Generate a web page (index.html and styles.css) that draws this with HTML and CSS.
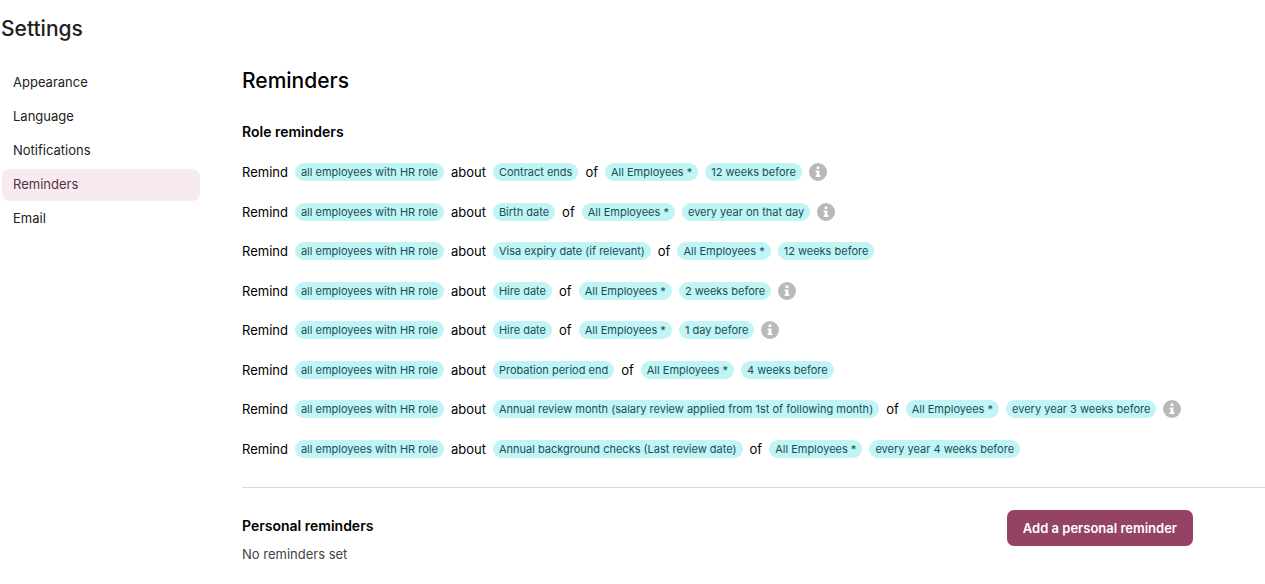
FILE: index.html
```html
<!DOCTYPE html>
<html lang="en">
<head>
<meta charset="utf-8">
<title>Settings</title>
<link rel="stylesheet" href="styles.css">
</head>
<body>
<svg class="sprite" width="0" height="0" aria-hidden="true">
  <symbol id="info" viewBox="0 0 18 18">
    <circle cx="9" cy="9" r="9" fill="#b9b9b9"/>
    <path fill="#fff" d="M7.6 3.6h2.8v2.5H7.6zM6.6 7.4h3.8v4.8h1v1.7H6.6v-1.7h1V9.1h-1z"/>
  </symbol>
</svg>
<h1 class="page-title">Settings</h1>
<div class="layout">
  <nav class="menu">
    <a class="menu-item" href="#appearance">Appearance</a>
    <a class="menu-item" href="#language">Language</a>
    <a class="menu-item" href="#notifications">Notifications</a>
    <a class="menu-item active" href="#reminders" aria-current="page">Reminders</a>
    <a class="menu-item" href="#email">Email</a>
  </nav>
  <main class="content">
    <h2 class="title">Reminders</h2>
    <h3 class="section-title">Role reminders</h3>
    <ul class="reminders">
      <li class="reminder">Remind <span class="pill">all employees with HR role</span> about <span class="pill">Contract ends</span> of <span class="pill">All Employees *</span> <span class="pill">12 weeks before</span> <button class="info" aria-label="More information"><svg><use href="#info"/></svg></button></li>
      <li class="reminder">Remind <span class="pill">all employees with HR role</span> about <span class="pill">Birth date</span> of <span class="pill">All Employees *</span> <span class="pill">every year on that day</span> <button class="info" aria-label="More information"><svg><use href="#info"/></svg></button></li>
      <li class="reminder">Remind <span class="pill">all employees with HR role</span> about <span class="pill">Visa expiry date (if relevant)</span> of <span class="pill">All Employees *</span> <span class="pill">12 weeks before</span></li>
      <li class="reminder">Remind <span class="pill">all employees with HR role</span> about <span class="pill">Hire date</span> of <span class="pill">All Employees *</span> <span class="pill">2 weeks before</span> <button class="info" aria-label="More information"><svg><use href="#info"/></svg></button></li>
      <li class="reminder">Remind <span class="pill">all employees with HR role</span> about <span class="pill">Hire date</span> of <span class="pill">All Employees *</span> <span class="pill">1 day before</span> <button class="info" aria-label="More information"><svg><use href="#info"/></svg></button></li>
      <li class="reminder">Remind <span class="pill">all employees with HR role</span> about <span class="pill">Probation period end</span> of <span class="pill">All Employees *</span> <span class="pill">4 weeks before</span></li>
      <li class="reminder">Remind <span class="pill">all employees with HR role</span> about <span class="pill">Annual review month (salary review applied from 1st of following month)</span> of <span class="pill">All Employees *</span> <span class="pill">every year 3 weeks before</span> <button class="info" aria-label="More information"><svg><use href="#info"/></svg></button></li>
      <li class="reminder">Remind <span class="pill">all employees with HR role</span> about <span class="pill">Annual background checks (Last review date)</span> of <span class="pill">All Employees *</span> <span class="pill">every year 4 weeks before</span></li>
    </ul>
    <section class="personal">
      <div>
        <h3 class="section-title">Personal reminders</h3>
        <p class="empty">No reminders set</p>
      </div>
      <button class="primary">Add a personal reminder</button>
    </section>
  </main>
</div>
</body>
</html>
```
FILE: styles.css
```css
* { box-sizing: border-box; }
body {
  margin: 0;
  background: #fff;
  color: #000;
  font: 13px/20px Inter, "Liberation Sans", sans-serif;
}
h1, h2, h3, p, ul { margin: 0; padding: 0; }
.sprite { display: block; }
.page-title {
  padding: 17px 1px 0;
  color: #212121;
  font-size: 21px;
  line-height: 24px;
  font-weight: 500;
}
.layout {
  display: flex;
  gap: 42px;
  padding: 26px 0 0 2px;
}
.menu {
  display: flex;
  flex: 0 0 198px;
  flex-direction: column;
  gap: 2px;
}
.menu-item {
  padding: 5px 11px 7px;
  border-radius: 8px;
  color: #212121;
  text-decoration: none;
}
.menu-item.active {
  background: #f7ebef;
  color: #55304a;
}
.content { flex: 1; min-width: 0; }
.title {
  padding-top: 2px;
  font-size: 21px;
  line-height: 24px;
  font-weight: 500;
}
.section-title {
  font-size: 14px;
  line-height: 20px;
  font-weight: 600;
}
.title + .section-title { margin-top: 29px; }
.reminders {
  display: flex;
  flex-direction: column;
  justify-content: space-between;
  min-height: 297px;
  margin: 20px 0 28px;
  list-style: none;
}
.reminder {
  display: flex;
  flex-wrap: wrap;
  align-items: center;
  gap: 7px;
}
.pill {
  padding: 0 6px;
  border-radius: 9px;
  background: #c1f4f5;
  color: #174f55;
  font-size: 11px;
  line-height: 18px;
}
.info {
  padding: 0;
  border: 0;
  background: none;
}
.info svg { display: block; width: 18px; height: 18px; }
.personal {
  display: flex;
  justify-content: space-between;
  align-items: flex-start;
  padding: 22px 72px 0 0;
  border-top: 1px solid #d8d8d8;
}
.personal .section-title { padding-top: 6px; }
.empty { margin-top: 8px; color: #444; }
.primary {
  padding: 8px 16px;
  border: 0;
  border-radius: 7px;
  background: #944364;
  color: #fff;
  font: 600 13px/20px Inter, "Liberation Sans", sans-serif;
}
```
